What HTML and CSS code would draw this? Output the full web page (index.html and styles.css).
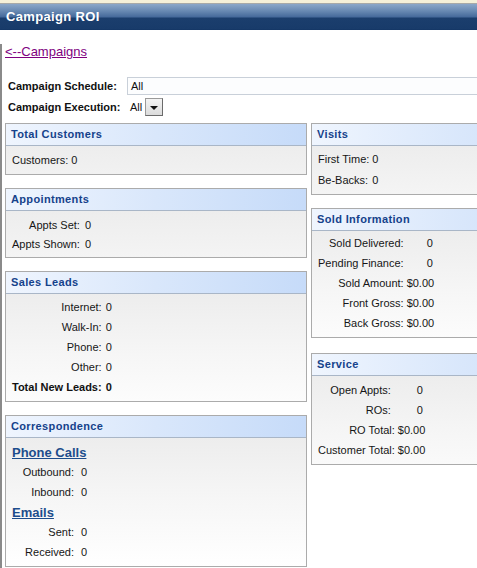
FILE: index.html
```
<!DOCTYPE html>
<html>
<head>
<meta charset="utf-8">
<title>Campaign ROI</title>
<link rel="stylesheet" href="styles.css">
</head>
<body>
<div class="topstrip"></div>
<div class="titlebar">Campaign ROI</div>
<div class="page">
  <a class="back" href="#">&lt;--Campaigns</a>
  <div class="filters">
    <label class="flabel">Campaign Schedule:</label>
    <div class="field">All</div>
    <label class="flabel">Campaign Execution:</label>
    <div class="select"><span class="sel-text">All</span><span class="sel-btn"><span class="tri"></span></span></div>
  </div>
  <div class="columns">
    <div class="col">
      <section class="panel">
        <h3 class="ph">Total Customers</h3>
        <div class="pb kv gap3">
          <span class="k">Customers:</span><span class="v">0</span>
        </div>
      </section>
      <section class="panel">
        <h3 class="ph">Appointments</h3>
        <div class="pb kv gap5 rows19">
          <span class="k">Appts Set:</span><span class="v">0</span>
          <span class="k">Appts Shown:</span><span class="v">0</span>
        </div>
      </section>
      <section class="panel">
        <h3 class="ph">Sales Leads</h3>
        <div class="pb kv gap4 top3">
          <span class="k">Internet:</span><span class="v">0</span>
          <span class="k">Walk-In:</span><span class="v">0</span>
          <span class="k">Phone:</span><span class="v">0</span>
          <span class="k">Other:</span><span class="v">0</span>
          <span class="k b">Total New Leads:</span><span class="v b">0</span>
        </div>
      </section>
      <section class="panel">
        <h3 class="ph">Correspondence</h3>
        <div class="pb kv corr">
          <a class="sec" href="#">Phone Calls</a>
          <span class="k">Outbound:</span><span class="v">0</span>
          <span class="k">Inbound:</span><span class="v">0</span>
          <a class="sec" href="#">Emails</a>
          <span class="k">Sent:</span><span class="v">0</span>
          <span class="k">Received:</span><span class="v">0</span>
        </div>
      </section>
    </div>
    <div class="col">
      <section class="panel">
        <h3 class="ph">Visits</h3>
        <div class="pb kv gap3 left rows21 top2">
          <span class="k">First Time:</span><span class="v">0</span>
          <span class="k">Be-Backs:</span><span class="v">0</span>
        </div>
      </section>
      <section class="panel">
        <h3 class="ph">Sold Information</h3>
        <div class="pb kv gap3 top2">
          <span class="k">Sold Delivered:</span><span class="v cnt22">0</span>
          <span class="k">Pending Finance:</span><span class="v cnt22">0</span>
          <span class="k">Sold Amount:</span><span class="v">$0.00</span>
          <span class="k">Front Gross:</span><span class="v">$0.00</span>
          <span class="k">Back Gross:</span><span class="v">$0.00</span>
        </div>
      </section>
      <section class="panel service">
        <h3 class="ph">Service</h3>
        <div class="pb kv gap3">
          <span class="k padr">Open Appts:</span><span class="v cnt21">0</span>
          <span class="k padr">ROs:</span><span class="v cnt21">0</span>
          <span class="k">RO Total:</span><span class="v">$0.00</span>
          <span class="k">Customer Total:</span><span class="v">$0.00</span>
        </div>
      </section>
    </div>
  </div>
</div>
</body>
</html>
```

FILE: styles.css
```
html, body {
  margin: 0;
  padding: 0;
  overflow: hidden;
  background: #ffffff;
}
body {
  font-family: "Liberation Sans", Arial, sans-serif;
  font-size: 11px;
  color: #161616;
  width: 640px;
}
.topstrip {
  height: 3px;
  background: #f5f0d8;
  border-bottom: 1px solid #a7a9a8;
}
.titlebar {
  height: 26px;
  line-height: 25px;
  padding-left: 6px;
  color: #ffffff;
  font-weight: bold;
  font-size: 13px;
  letter-spacing: 0.35px;
  background: linear-gradient(to bottom, #8ba7c9 0px, #6889b2 7px, #45699a 13px, #1b3e6d 14px, #183b6a 25px, #123463 26px);
}
.page {
  border-left: 2px solid #8a8a8a;
  padding-left: 3px;
  padding-bottom: 20px;
}
.back {
  display: block;
  width: max-content;
  margin-top: 14px;
  font-size: 13px;
  line-height: 15px;
  color: #800080;
  text-decoration: underline;
}
.filters {
  margin-top: 16px;
  padding-left: 3px;
  display: grid;
  grid-template-columns: 119px auto;
  grid-template-rows: 21px 21px;
  align-items: center;
}
.flabel {
  font-weight: bold;
  white-space: nowrap;
  color: #111111;
}
.field {
  width: 400px;
  height: 16px;
  line-height: 16px;
  border: 1px solid #c9d0d9;
  padding-left: 3px;
  background: #fcfdfe;
  color: #111111;
}
.select {
  display: flex;
  align-items: center;
  width: max-content;
  height: 19px;
  color: #111111;
}
.sel-text {
  padding-left: 3px;
  padding-right: 3px;
}
.sel-btn {
  width: 16px;
  height: 16px;
  border: 1px solid #6b6b6b;
  border-top-color: #9a9a9a;
  border-left-color: #9a9a9a;
  background: linear-gradient(#f4f4f4, #dcdcdc);
  display: flex;
  align-items: center;
  justify-content: center;
}
.tri {
  width: 0;
  height: 0;
  border-left: 4px solid transparent;
  border-right: 4px solid transparent;
  border-top: 4px solid #111111;
  margin-top: 2px;
}
.columns {
  margin-top: 6px;
  display: flex;
  gap: 4px;
}
.col {
  width: 302px;
  flex: none;
  display: flex;
  flex-direction: column;
  gap: 13px;
}
.panel {
  border: 1px solid #ababab;
  background: #ffffff;
}
.service {
  margin-top: 2px;
}
.ph {
  margin: 0;
  height: 21px;
  line-height: 21px;
  padding-left: 5px;
  font-size: 11px;
  font-weight: bold;
  letter-spacing: 0.35px;
  color: #15428b;
  border-bottom: 1px solid #a9b6c7;
  background: linear-gradient(to right, #eff5fe 0%, #d9e7fb 50%, #c6dbf9 100%);
}
.pb {
  padding: 4px 6px 4px 6px;
  background: linear-gradient(to bottom, #ededed 0px, #f6f6f6 60px, #ffffff 130px);
}
.kv {
  display: grid;
  grid-template-columns: max-content max-content;
  grid-auto-rows: 20px;
  align-items: center;
  column-gap: 4px;
}
.kv .k {
  text-align: right;
  white-space: nowrap;
}
.kv .v {
  white-space: nowrap;
}
.kv.left .k {
  text-align: left;
}
.gap1 { column-gap: 1px; }
.gap3 { column-gap: 3px; }
.gap4 { column-gap: 4px; }
.gap5 { column-gap: 5px; }
.rows19 { grid-auto-rows: 19px; }
.rows21 { grid-auto-rows: 21px; }
.top2 { padding-top: 2px; }
.top3 { padding-top: 3px; }
.b { font-weight: bold; color: #111111; }
.padr { padding-right: 4px; }
.cnt22 { padding-left: 20px; }
.cnt21 { padding-left: 19px; }
.corr {
  grid-template-columns: 62px max-content;
  column-gap: 7px;
  padding-top: 4px;
}
.sec {
  grid-column: 1 / -1;
  width: max-content;
  font-size: 13px;
  font-weight: bold;
  color: #1d4d8c;
  text-decoration: underline;
}
```
